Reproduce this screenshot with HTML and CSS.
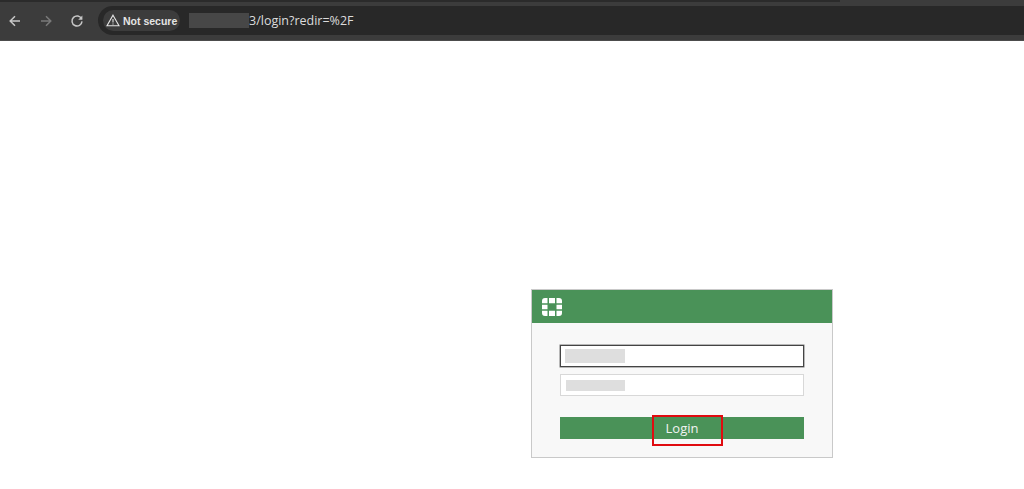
FILE: index.html
```html
<!DOCTYPE html>
<html lang="en">
<head>
<meta charset="utf-8">
<title>Login</title>
<link rel="stylesheet" href="styles.css">
</head>
<body>
<header class="toolbar">
  <div class="topline"></div>
  <div class="toolrow">
    <nav class="navs">
      <svg class="nav" viewBox="0 0 14 14"><path d="M12 7H2.5M7 2.2 2.2 7 7 11.8"/></svg>
      <svg class="nav dim" viewBox="0 0 14 14"><path d="M2 7h9.5M7 2.2 11.8 7 7 11.8"/></svg>
      <svg class="nav" viewBox="0 0 14 14"><path d="M11.6 5A5 5 0 1 0 12 7.4"/><path class="fill" d="M12.4 1.6v4.2H8.2z"/></svg>
    </nav>
    <div class="omnibox">
      <div class="chip">
        <svg class="warn" viewBox="0 0 14 13"><path d="M7 1.2 13 11.8H1zM7 5v3.6M7 9.6v.9"/></svg>
        <span>Not secure</span>
      </div>
      <span class="urlblur"></span>
      <span class="url">3/login?redir=%2F</span>
    </div>
  </div>
</header>
<main class="page">
  <form class="card">
    <div class="cardhead">
      <svg class="logo" viewBox="0 0 24 20">
        <path d="M2 6.2V4a3 3 0 0 1 3-3h2.5v5.2zM9 1h6v5.2H9zM16.500 1H19a3 3 0 0 1 3 3v2.200h-5.500zM2 7.700h5.500v4.600H2zM16.500 7.700H22v4.600h-5.500zM2 13.800h5.500V19H5a3 3 0 0 1-3-3zM9 13.800h6V19H9zM16.500 13.800H22V16a3 3 0 0 1-3 3h-2.500z"/>
      </svg>
    </div>
    <div class="cardbody">
      <div class="field focused"><span class="blur"></span></div>
      <div class="field"><span class="blur short"></span></div>
      <div class="submit">
        <span>Login</span>
        <span class="annotation"></span>
      </div>
    </div>
  </form>
</main>
</body>
</html>
```

FILE: styles.css
```css
* { box-sizing: border-box; }
html, body { margin: 0; padding: 0; height: 100%; background: #fff; overflow: hidden; }
body { font-family: "Open Sans", "Liberation Sans", sans-serif; }

.toolbar { height: 41px; background: #3c3c3c; border-bottom: 1px solid #4c4c4c; }
.topline { height: 2px; width: 840px; background: #2b2b2b; }
.toolrow { display: flex; align-items: center; height: 29px; margin-top: 4px; }
.navs { display: flex; align-items: center; gap: 17px; width: 98px; padding-left: 8px; }
.nav { width: 14px; height: 14px; fill: none; stroke: #c7c7c7; stroke-width: 1.500; }
.nav.dim { stroke: #7a7a7a; }
.nav .fill { fill: #c7c7c7; stroke: none; }

.omnibox { flex: 1; height: 29px; background: #282828; border-radius: 15px 0 0 15px; display: flex; align-items: center; padding-left: 5px; }
.chip { width: 77px; height: 21px; border-radius: 11px; background: #3c3c3c; display: flex; align-items: center; gap: 3px; padding-left: 3px; color: #e4e4e4; font: bold 10.500px "Liberation Sans", sans-serif; white-space: nowrap; }
.warn { width: 14px; height: 13px; fill: none; stroke: #e4e4e4; stroke-width: 1.100; flex: none; }
.urlblur { width: 60px; height: 15px; margin-left: 9px; background: #474747; }
.url { color: #dcdcdc; font-size: 12.500px; white-space: nowrap; }

.page { padding: 248px 0 0 531px; }
.card { width: 302px; height: 169px; border: 1px solid #c9c9c9; background: #f8f8f8; }
.cardhead { height: 33px; background: #4a9258; display: flex; align-items: center; padding-left: 8px; }
.logo { width: 24px; height: 20px; fill: #fff; }
.cardbody { padding: 22px 28px 0; display: flex; flex-direction: column; }
.field { height: 22px; background: #fff; border: 1px solid #d8d8d8; display: flex; align-items: center; padding-left: 4px; margin-bottom: 7px; }
.field.focused { border-color: #444; box-shadow: 0 0 0 .5px #777; }
.blur { width: 60px; height: 14px; background: #dedede; }
.blur.short { height: 11px; margin-left: 1px; width: 59px; }
.submit { position: relative; height: 22px; margin-top: 14px; background: #4a9258; color: #f2f2f2; font-size: 13px; display: flex; align-items: center; justify-content: center; }
.annotation { position: absolute; left: 92px; top: -2px; width: 71px; height: 31px; border: 2px solid #e00b10; }
```
